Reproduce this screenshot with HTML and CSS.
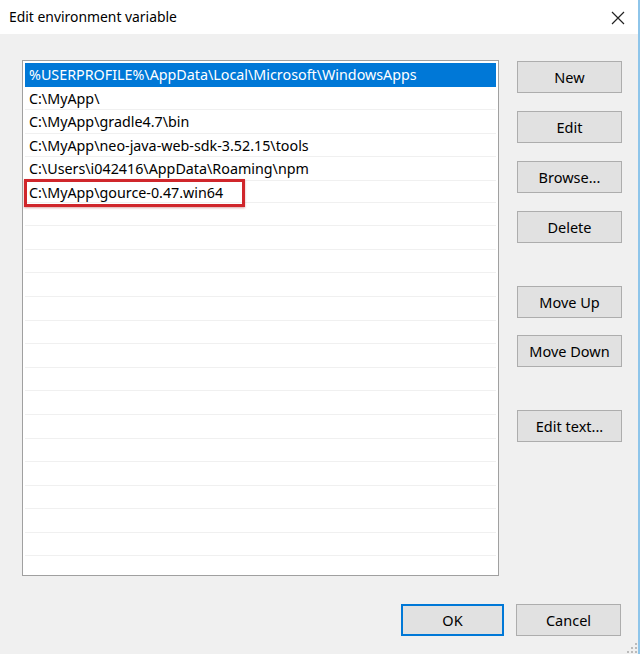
FILE: index.html
```html
<!DOCTYPE html>
<html lang="en">
<head>
    <meta charset="UTF-8">
    <title>Edit environment variable</title>
    <link rel="stylesheet" href="styles.css">
</head>
<body>
    <div class="window">
        <div class="titlebar">
            <span class="title">Edit environment variable</span>
            <svg class="close" width="14" height="14" viewBox="0 0 14 14">
                <path d="M1 1 L13 13 M13 1 L1 13" stroke="#222" stroke-width="1.2" fill="none"/>
            </svg>
        </div>
        <div class="content">
            <div class="top">
                <div class="list">
                    <div class="row selected">%USERPROFILE%\AppData\Local\Microsoft\WindowsApps</div>
                    <div class="row">C:\MyApp\</div>
                    <div class="row">C:\MyApp\gradle4.7\bin</div>
                    <div class="row">C:\MyApp\neo-java-web-sdk-3.52.15\tools</div>
                    <div class="row">C:\Users\i042416\AppData\Roaming\npm</div>
                    <div class="row"><div class="marked">C:\MyApp\gource-0.47.win64</div></div>
                    <div class="row"></div>
                    <div class="row"></div>
                    <div class="row"></div>
                    <div class="row"></div>
                    <div class="row"></div>
                    <div class="row"></div>
                    <div class="row"></div>
                    <div class="row"></div>
                    <div class="row"></div>
                    <div class="row"></div>
                    <div class="row"></div>
                    <div class="row"></div>
                    <div class="row"></div>
                    <div class="row"></div>
                    <div class="row"></div>
                    <div class="row"></div>
                </div>
                <div class="side">
                    <button class="btn">New</button>
                    <button class="btn">Edit</button>
                    <button class="btn">Browse...</button>
                    <button class="btn">Delete</button>
                    <button class="btn group up">Move Up</button>
                    <button class="btn">Move Down</button>
                    <button class="btn group">Edit text...</button>
                </div>
            </div>
            <div class="bottom">
                <button class="btn default">OK</button>
                <button class="btn">Cancel</button>
            </div>
            <svg class="grip" width="10" height="10" viewBox="0 0 10 10">
                <rect x="8" y="0" width="2" height="2" fill="#bbb"/>
                <rect x="4" y="4" width="2" height="2" fill="#bbb"/>
                <rect x="8" y="4" width="2" height="2" fill="#bbb"/>
                <rect x="0" y="8" width="2" height="2" fill="#bbb"/>
                <rect x="4" y="8" width="2" height="2" fill="#bbb"/>
                <rect x="8" y="8" width="2" height="2" fill="#bbb"/>
            </svg>
        </div>
    </div>
</body>
</html>
```

FILE: styles.css
```css
html, body {
    margin: 0;
    padding: 0;
}
body {
    font-family: "Noto Sans", "Open Sans", sans-serif;
    font-size: 14.3px;
    color: #000;
    background: #f0f0f0;
}
.window {
    width: 638px;
    height: 654px;
    border-right: 2px solid #8ec5ea;
    background: #f0f0f0;
}
.titlebar {
    height: 34px;
    background: #fff;
    display: flex;
    align-items: center;
    justify-content: space-between;
    padding: 0 13px 0 9px;
}
.title {
    font-size: 13.9px;
    margin-top: -1px;
}
.close {
    margin-top: 1px;
}
.content {
    position: relative;
    height: 620px;
    padding: 26px 0 0 22px;
    box-sizing: border-box;
}
.top {
    display: flex;
}
.list {
    width: 477px;
    height: 516px;
    box-sizing: border-box;
    border: 1px solid #a0a0a0;
    background: #fff;
    padding: 2px 2px 0 2px;
    overflow: hidden;
}
.row {
    height: 23.6px;
    line-height: 23px;
    box-sizing: border-box;
    border-bottom: 1px solid #f0f0f0;
    padding-left: 4px;
    white-space: nowrap;
}
.row.selected {
    background: #0078d7;
    color: #fff;
    border-bottom-color: #0078d7;
}
.marked {
    width: fit-content;
    margin: -2px 0 0 -5px;
    padding: 0 19px 0 2px;
    line-height: 22px;
    border: 3px solid #d0262b;
    box-shadow: 0 1px 2px rgba(150, 0, 0, 0.35);
}
.side {
    display: flex;
    flex-direction: column;
    margin-left: 18px;
    padding-top: 1px;
}
.btn {
    width: 105px;
    height: 32px;
    box-sizing: border-box;
    background: #e1e1e1;
    border: 1px solid #adadad;
    font-family: "Noto Sans", "Open Sans", sans-serif;
    font-size: 14.5px;
    color: #000;
    padding: 0;
    margin-bottom: 18px;
}
.side .btn.group {
    margin-top: 25px;
}
.side .btn.up {
    margin-bottom: 17px;
}
.bottom {
    display: flex;
    justify-content: flex-end;
    gap: 12px;
    margin-top: 28px;
    padding-right: 17px;
}
.bottom .btn {
    height: 32px;
    margin: 0;
}
.btn.default {
    border: 2px solid #0078d7;
    width: 103px;
}
.grip {
    position: absolute;
    right: 1px;
    bottom: 1px;
}
```
